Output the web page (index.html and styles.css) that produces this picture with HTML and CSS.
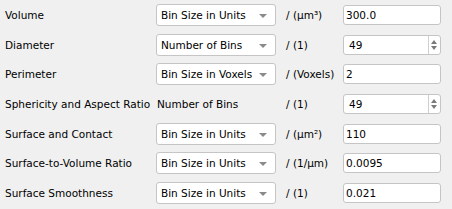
FILE: index.html
```html
<!DOCTYPE html>
<html lang="en">
<head>
  <meta charset="UTF-8">
  <title>Histogram Settings</title>
  <link rel="stylesheet" href="styles.css">
</head>
<body>

<div class="form">
  <div class="label">Volume</div>
  <div class="combo">Bin Size in Units<span class="arrow"></span></div>
  <div class="unit">/ (µm³)</div>
  <div class="field">300.0</div>

  <div class="label">Diameter</div>
  <div class="combo">Number of Bins<span class="arrow"></span></div>
  <div class="unit">/ (1)</div>
  <div class="field spin">49<span class="spin-btn"><span class="up"></span><span class="down"></span></span></div>

  <div class="label">Perimeter</div>
  <div class="combo">Bin Size in Voxels<span class="arrow"></span></div>
  <div class="unit">/ (Voxels)</div>
  <div class="field">2</div>

  <div class="label">Sphericity and Aspect Ratio</div>
  <div class="plain">Number of Bins</div>
  <div class="unit">/ (1)</div>
  <div class="field spin">49<span class="spin-btn"><span class="up"></span><span class="down"></span></span></div>

  <div class="label">Surface and Contact</div>
  <div class="combo">Bin Size in Units<span class="arrow"></span></div>
  <div class="unit">/ (µm²)</div>
  <div class="field">110</div>

  <div class="label">Surface-to-Volume Ratio</div>
  <div class="combo">Bin Size in Units<span class="arrow"></span></div>
  <div class="unit">/ (1/µm)</div>
  <div class="field">0.0095</div>

  <div class="label">Surface Smoothness</div>
  <div class="combo">Bin Size in Units<span class="arrow"></span></div>
  <div class="unit">/ (1)</div>
  <div class="field">0.021</div>
</div>

</body>
</html>
```

FILE: styles.css
```css
body {
  margin: 0;
  background: #f0f0f0;
  font-family: "DejaVu Sans", Tahoma, sans-serif;
  font-size: 10.5px;
  color: #000;
}
.form {
  display: grid;
  grid-template-columns: 151px 120px 67px 98px;
  grid-auto-rows: 22px;
  row-gap: 7.67px;
  padding: 4px 0 0 5px;
}
.form > div {
  display: flex;
  align-items: center;
  white-space: nowrap;
}
.combo {
  position: relative;
  box-sizing: border-box;
  background: #fff;
  border: 1px solid #c5c5c5;
  border-radius: 3px;
  padding-left: 4px;
}
.arrow {
  position: absolute;
  right: 8px;
  top: 9px;
  border-left: 4px solid transparent;
  border-right: 4px solid transparent;
  border-top: 4px solid #8a8a8a;
}
.plain { padding-left: 1px; }
.unit { padding-left: 10px; }
.field {
  position: relative;
  box-sizing: border-box;
  height: 20px;
  margin-top: 1px;
  background: #fff;
  border: 1px solid #c5c5c5;
  border-radius: 3px;
  padding-left: 2px;
}
.field.spin { padding-left: 5px; }
.spin-btn {
  position: absolute;
  right: 0;
  top: 0;
  bottom: 0;
  width: 11px;
  border-left: 1px solid #d0d0d0;
}
.up, .down {
  position: absolute;
  left: 2px;
  border-left: 3.5px solid transparent;
  border-right: 3.5px solid transparent;
}
.up { top: 4px; border-bottom: 4px solid #7a7a7a; }
.down { bottom: 4px; border-top: 4px solid #7a7a7a; }
```
